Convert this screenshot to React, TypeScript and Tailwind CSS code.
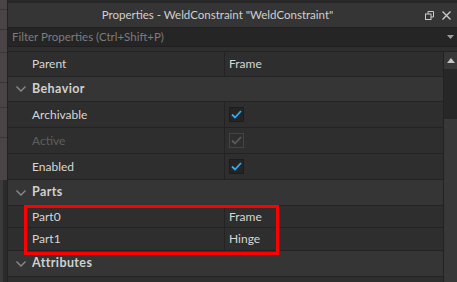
import React from "react";

const font = { fontFamily: "Lato, 'Liberation Sans', sans-serif" };

function Chevron() {
  return (
    <svg width="10" height="6" viewBox="0 0 10 6" className="shrink-0">
      <path d="M0.5 0.5 L5 5 L9.5 0.5" fill="none" stroke="#8a8a8a" strokeWidth="1.4" />
    </svg>
  );
}

function Check({ disabled }: { disabled?: boolean }) {
  return (
    <div
      className={
        "w-[15px] h-[15px] flex items-center justify-center border " +
        (disabled ? "border-[#444444] bg-[#2e2e2e]" : "border-[#1c1c1c] bg-[#242424]")
      }
    >
      <svg width="11" height="9" viewBox="0 0 11 9">
        <path
          d="M1 4.5 L4 7.5 L10 1"
          fill="none"
          stroke={disabled ? "#5a5a5a" : "#35a8f0"}
          strokeWidth="1.8"
        />
      </svg>
    </div>
  );
}

function Header({ label, h }: { label: string; h: string }) {
  return (
    <div className={"flex items-center bg-[#353535] border-b border-[#232323] " + h}>
      <div className="w-[24px] flex justify-center pl-[2px]">
        <Chevron />
      </div>
      <span className="text-[12.5px] font-bold text-[#d0d0d0] tracking-[0.4px]">{label}</span>
    </div>
  );
}

function Prop({
  label,
  value,
  h,
  disabled,
}: {
  label: string;
  value: React.ReactNode;
  h: string;
  disabled?: boolean;
}) {
  return (
    <div className={"flex bg-[#2e2e2e] border-b border-[#232323] " + h}>
      <div className="w-[217px] flex items-center pl-[24px] border-r border-[#232323]">
        <span className={"text-[12px] " + (disabled ? "text-[#5e5e5e]" : "text-[#d6d6d6]")}>{label}</span>
      </div>
      <div className="flex-1 flex items-center pl-[4px]">
        {typeof value === "string" ? (
          <span className="text-[12px] text-[#d6d6d6]">{value}</span>
        ) : (
          value
        )}
      </div>
    </div>
  );
}

export default function App() {
  return (
    <div className="w-[457px] h-[282px] flex overflow-hidden bg-[#2e2e2e]" style={font}>
      {/* left sliver of viewport */}
      <div className="w-[7px] flex flex-col">
        <div className="h-[180px] bg-[#4a4447] flex flex-col">
          <div className="h-[10px] border-b border-[#3a3537]" />
          <div className="h-[20px] border-b border-[#3a3537]" />
          <div className="h-[23px] border-b border-[#3a3537]" />
          <div className="h-[30px] border-b border-[#3a3537]" />
          <div className="h-[25px] border-b border-[#3a3537]" />
          <div className="h-[30px] border-b border-[#3a3537]" />
        </div>
        <div className="flex-1 bg-[#2b2b2b] border-l-[3px] border-[#3a3a3a]" />
      </div>

      {/* panel */}
      <div className="flex-1 flex flex-col border-l border-[#222222]">
        <div className="h-[3px] bg-[#282828]" />
        <div className="h-[24px] bg-[#353535] flex items-center">
          <div className="flex-1 text-center text-[11.5px] text-[#d0d0d0] pl-[2px]">
            Properties - WeldConstraint "WeldConstraint"
          </div>
          <div className="w-[32px] flex items-center gap-[8px]">
            <svg width="9" height="9" viewBox="0 0 9 9">
              <rect x="0.5" y="3" width="5.5" height="5.5" fill="none" stroke="#cccccc" strokeWidth="1" />
              <path d="M3 3 V0.5 H8.5 V6 H6" fill="none" stroke="#cccccc" strokeWidth="1" />
            </svg>
            <svg width="9" height="9" viewBox="0 0 9 9">
              <path d="M0.5 0.5 L8.5 8.5 M8.5 0.5 L0.5 8.5" stroke="#cccccc" strokeWidth="1.3" />
            </svg>
          </div>
        </div>
        <div className="h-[20px] bg-[#252525] border-y border-[#1f1f1f] flex items-center pl-[4px] pr-[3px]">
          <span className="flex-1 text-[11.5px] text-[#7c7c7c]">Filter Properties (Ctrl+Shift+P)</span>
          <svg width="7" height="4" viewBox="0 0 7 4">
            <path d="M0 0 H7 L3.5 4 Z" fill="#9a9a9a" />
          </svg>
        </div>
        <div className="h-[5px] bg-[#2e2e2e] border-b border-[#232323]" />
        <div className="flex-1 flex">
          <div className="flex-1 flex flex-col relative">
            <Prop label="Parent" value="Frame" h="h-[25px]" />
            <Header label="Behavior" h="h-[25px]" />
            <Prop label="Archivable" value={<Check />} h="h-[26px]" />
            <Prop label="Active" value={<Check disabled />} h="h-[26px]" disabled />
            <Prop label="Enabled" value={<Check />} h="h-[26px]" />
            <Header label="Parts" h="h-[26px]" />
            <Prop label="Part0" value="Frame" h="h-[22px]" />
            <Prop label="Part1" value="Hinge" h="h-[23px]" />
            <Header label="Attributes" h="h-[26px]" />
            <div className="flex-1 bg-[#2e2e2e]" />
            <div className="absolute left-[16px] top-[153px] w-[255px] h-[50px] border-[3.5px] border-[#ff0000]" />
          </div>
          <div className="w-[14px] flex flex-col border-l border-[#222222]">
            <div className="h-[17px] bg-[#373737] flex items-center justify-center">
              <svg width="8" height="5" viewBox="0 0 8 5">
                <path d="M0 5 L4 0 L8 5 Z" fill="#c4c4c4" />
              </svg>
            </div>
            <div className="h-[50px] bg-[#272727]" />
            <div className="flex-1 bg-[#383838]" />
          </div>
        </div>
      </div>
    </div>
  );
}
